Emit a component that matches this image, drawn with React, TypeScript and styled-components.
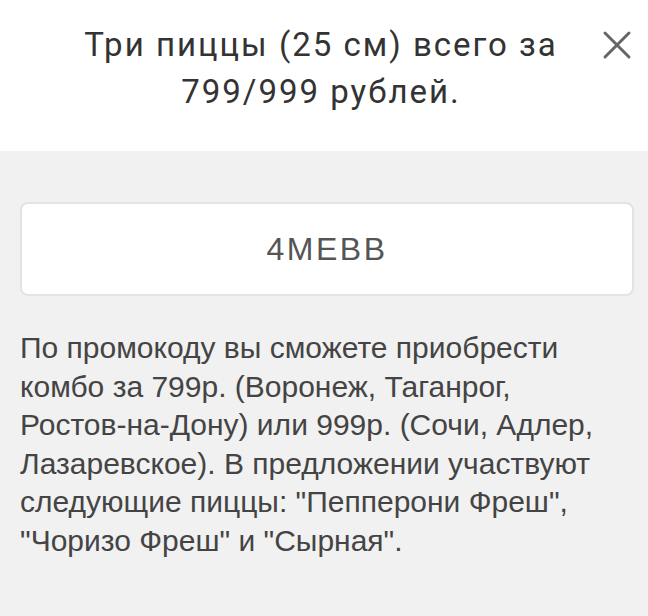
import styled, { createGlobalStyle } from "styled-components";

const GlobalStyle = createGlobalStyle`
    html, body {
        margin: 0;
        padding: 0;
        background: #f1f1f1;
    }
    body {
        font-family: "Liberation Sans", Arial, sans-serif;
    }
`

const App: React.FC = () => {
    return (
        <>
            <GlobalStyle />
            <Sheet>
                <Header>
                    <Title>Три пиццы (25 см) всего за 799/999 рублей.</Title>
                    <Close aria-label="close">
                        <svg width="30" height="30" viewBox="0 0 30 30">
                            <path d="M3 3 L27 27 M27 3 L3 27" stroke="#666" strokeWidth="3" strokeLinecap="round" />
                        </svg>
                    </Close>
                </Header>
                <Body>
                    <CodeCard>4MEBB</CodeCard>
                    <Description>
                        По промокоду вы сможете приобрести комбо за 799р. (Воронеж, Таганрог,
                        Ростов&#8209;на&#8209;Дону) или 999р. (Сочи, Адлер, Лазаревское). В предложении участвуют
                        следующие пиццы: "Пепперони Фреш", "Чоризо Фреш" и "Сырная".
                    </Description>
                </Body>
            </Sheet>
        </>
    )
}
export default App;

const Sheet = styled.div`
    width: 648px;
    min-height: 616px;
    display: flex;
    flex-direction: column;
`
const Header = styled.div`
    background: #fff;
    height: 151px;
    box-sizing: border-box;
    padding: 21px 46px 0 40px;
    position: relative;
`
const Title = styled.div`
    font-family: Roboto, sans-serif;
    font-size: 33px;
    line-height: 47px;
    letter-spacing: 2px;
    color: #333;
    text-align: center;
`
const Close = styled.div`
    position: absolute;
    top: 30px;
    right: 16px;
    width: 30px;
    height: 30px;
`
const Body = styled.div`
    flex: 1;
    background: #f1f1f1;
    padding: 51px 14px 0 20px;
`
const CodeCard = styled.div`
    height: 90px;
    background: #fff;
    border: 2px solid #e3e3e3;
    border-radius: 8px;
    display: flex;
    align-items: center;
    justify-content: center;
    font-size: 32px;
    color: #555;
    letter-spacing: 2.5px;
`
const Description = styled.p`
    margin: 33px 20px 0 0;
    font-size: 30px;
    line-height: 38.6px;
    color: #444;
`
